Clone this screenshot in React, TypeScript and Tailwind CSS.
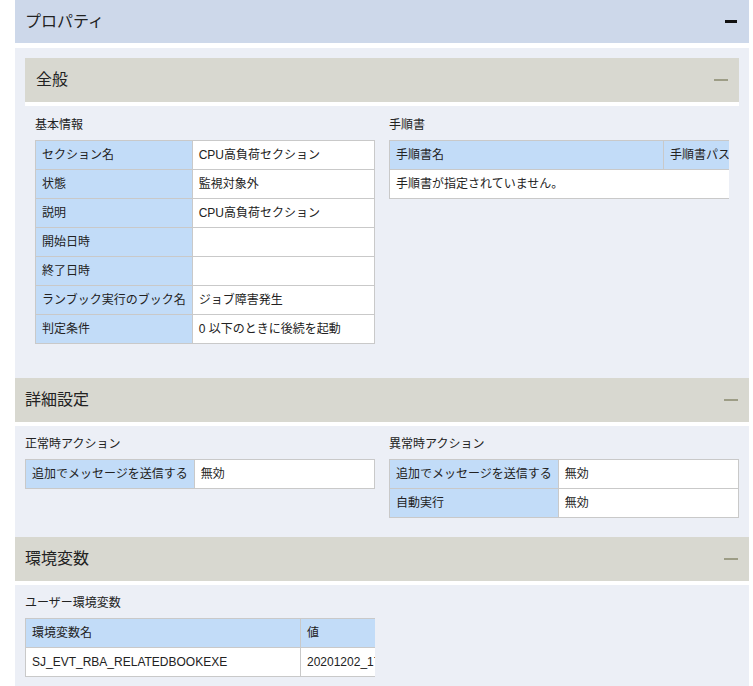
import React from "react";

const basicInfo = [
  ["セクション名", "CPU高負荷セクション"],
  ["状態", "監視対象外"],
  ["説明", "CPU高負荷セクション"],
  ["開始日時", ""],
  ["終了日時", ""],
  ["ランブック実行のブック名", "ジョブ障害発生"],
  ["判定条件", "0 以下のときに後続を起動"],
];

const cell = "h-[29px] border border-[#c9c9c9] px-[6px] align-middle whitespace-nowrap";
const labelCell = cell + " bg-[#c2dcf8]";
const valueCell = cell + " bg-white";

const SectionHeader = ({ title, inset }: { title: string; inset?: boolean }) => (
  <div className="border-b-4 border-white">
    <div
      className={
        "flex h-[44px] items-center justify-between bg-[#d8d8d0] pr-[11px] text-[16px] text-[#222] " +
        (inset ? "pl-[11px]" : "pl-[10px]")
      }
    >
      <span>{title}</span>
      <div className="h-[2px] w-[14px] bg-[#9d9d86]" />
    </div>
  </div>
);

const Label = ({ children }: { children: React.ReactNode }) => (
  <div className="mb-[6px] h-[18px] text-[12px] leading-[18px]">{children}</div>
);

export default function App() {
  return (
    <div
      className="min-h-[686px] w-[753px] bg-white pl-[15px] pr-[4px] text-[#222]"
      style={{ fontFamily: '"Liberation Sans", "Noto Sans CJK JP", sans-serif' }}
    >
      {/* top header */}
      <div className="flex h-[43px] items-center justify-between bg-[#cdd8ea] pl-[10px] pr-[12px] text-[16px]">
        <span>プロパティ</span>
        <div className="h-[3px] w-[12px] bg-[#111]" />
      </div>

      <div className="mt-[5px] bg-[#eceff6] p-[10px]">
        <SectionHeader title="全般" inset />
        <div className="grid grid-cols-2 gap-x-[14px] px-[10px] pb-[24px] pt-[10px]">
          <div>
            <Label>基本情報</Label>
            <table className="w-full border-collapse text-[12px]">
              <tbody>
                {basicInfo.map(([k, v]) => (
                  <tr key={k}>
                    <td className={labelCell + " w-[1%]"}>{k}</td>
                    <td className={valueCell}>{v}</td>
                  </tr>
                ))}
              </tbody>
            </table>
          </div>
          <div>
            <Label>手順書</Label>
            <div className="w-full overflow-hidden">
              <table className="w-[420px] table-fixed border-collapse text-[12px]">
                <colgroup>
                  <col className="w-[274px]" />
                  <col className="w-[146px]" />
                </colgroup>
                <tbody>
                  <tr>
                    <td className={labelCell}>手順書名</td>
                    <td className={labelCell}>手順書パス</td>
                  </tr>
                  <tr>
                    <td className={valueCell} colSpan={2}>
                      手順書が指定されていません。
                    </td>
                  </tr>
                </tbody>
              </table>
            </div>
          </div>
        </div>
      </div>

      <SectionHeader title="詳細設定" />
      <div className="grid grid-cols-2 gap-x-[14px] bg-[#eceff6] px-[10px] pb-[19px] pt-[9px]">
        <div>
          <Label>正常時アクション</Label>
          <table className="w-full border-collapse text-[12px]">
            <tbody>
              <tr>
                <td className={labelCell + " w-[1%]"}>追加でメッセージを送信する</td>
                <td className={valueCell}>無効</td>
              </tr>
            </tbody>
          </table>
        </div>
        <div>
          <Label>異常時アクション</Label>
          <table className="w-full border-collapse text-[12px]">
            <tbody>
              <tr>
                <td className={labelCell + " w-[1%]"}>追加でメッセージを送信する</td>
                <td className={valueCell}>無効</td>
              </tr>
              <tr>
                <td className={labelCell + " w-[1%]"}>自動実行</td>
                <td className={valueCell}>無効</td>
              </tr>
            </tbody>
          </table>
        </div>
      </div>

      <SectionHeader title="環境変数" />
      <div className="bg-[#eceff6] px-[10px] pb-[20px] pt-[9px]">
        <Label>ユーザー環境変数</Label>
        <div className="w-[350px] overflow-hidden">
          <table className="w-[480px] table-fixed border-collapse text-[12px]">
            <colgroup>
              <col className="w-[275px]" />
              <col className="w-[205px]" />
            </colgroup>
            <tbody>
              <tr>
                <td className={labelCell}>環境変数名</td>
                <td className={labelCell}>値</td>
              </tr>
              <tr>
                <td className={valueCell}>SJ_EVT_RBA_RELATEDBOOKEXE</td>
                <td className={valueCell}>20201202_173015</td>
              </tr>
            </tbody>
          </table>
        </div>
      </div>
    </div>
  );
}
